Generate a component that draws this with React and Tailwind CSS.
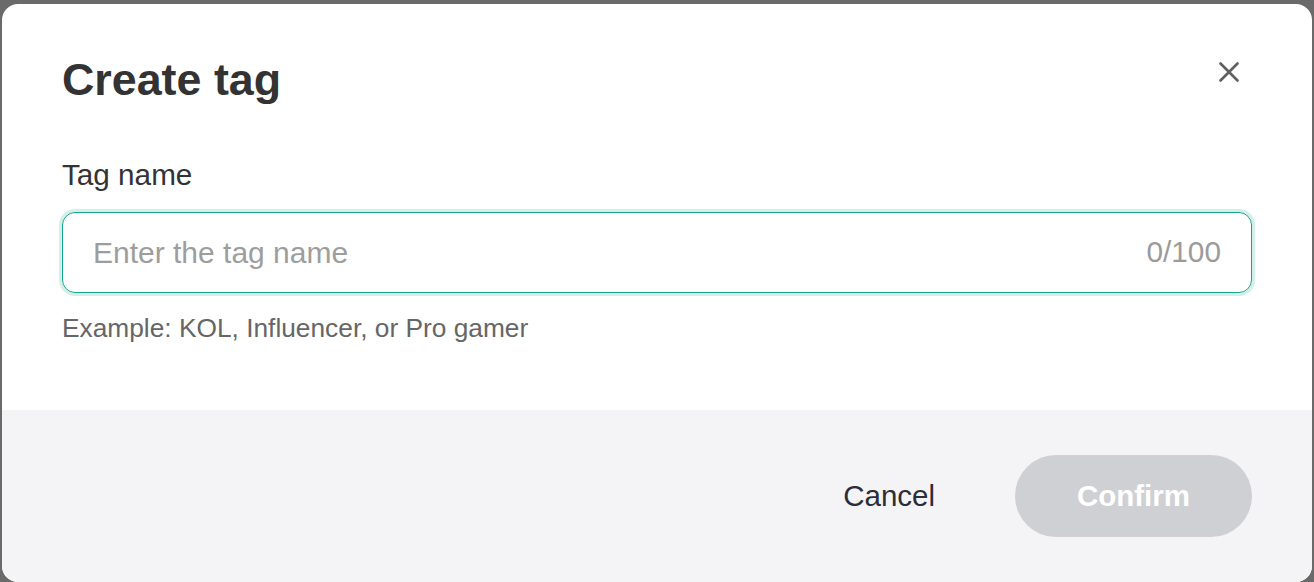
import React from 'react'

export default function App() {
    return (
        <div className="min-h-screen bg-[#6a6a6a] pt-[4px] px-[2px] font-['Liberation_Sans',Arial,sans-serif]">
            <div className="bg-white rounded-[16px] overflow-hidden h-[578px] flex flex-col">
                {/* Body */}
                <div className="px-[60px] pt-[49px] pb-[64px]">
                    <div className="flex items-start justify-between">
                        <h2 className="text-[44.8px] leading-[53px] font-bold text-[#333333]">Create tag</h2>
                        <button className="w-10 h-10 -mt-[1px] mr-[3px] flex items-center justify-center text-[#5f5f5f]">
                            <svg width="20" height="20" viewBox="0 0 20 20" fill="none" stroke="currentColor" strokeWidth="2.6" strokeLinecap="round">
                                <path d="M1.5 1.5 L18.5 18.5" />
                                <path d="M18.5 1.5 L1.5 18.5" />
                            </svg>
                        </button>
                    </div>

                    <label className="block mt-[49px] text-[29.7px] leading-[40px] text-[#333333]">Tag name</label>

                    <div className="mt-[17px] h-[81px] flex items-center px-[30px] border border-[#16a58a] rounded-[13px] shadow-[0_0_0_3px_#d3efe9]">
                        <input
                            type="text"
                            placeholder="Enter the tag name"
                            className="flex-1 min-w-0 bg-transparent outline-none text-[30px] text-[#333333] placeholder:text-[#9d9d9d]"
                        />
                        <span className="text-[29.8px] text-[#9b9b9b]">0/100</span>
                    </div>

                    <p className="mt-[17px] text-[26.3px] leading-[36px] text-[#666666]">Example: KOL, Influencer, or Pro gamer</p>
                </div>

                {/* Footer */}
                <div className="flex-1 bg-[#f4f4f6] flex items-center justify-end gap-[40px] px-[60px]">
                    <button className="h-[82px] px-[40px] text-[29.5px] text-[#2a2e39]">Cancel</button>
                    <button className="h-[82px] w-[237px] rounded-full bg-[#cfd0d3] text-white text-[29.5px] font-bold">Confirm</button>
                </div>
            </div>
        </div>
    )
}
